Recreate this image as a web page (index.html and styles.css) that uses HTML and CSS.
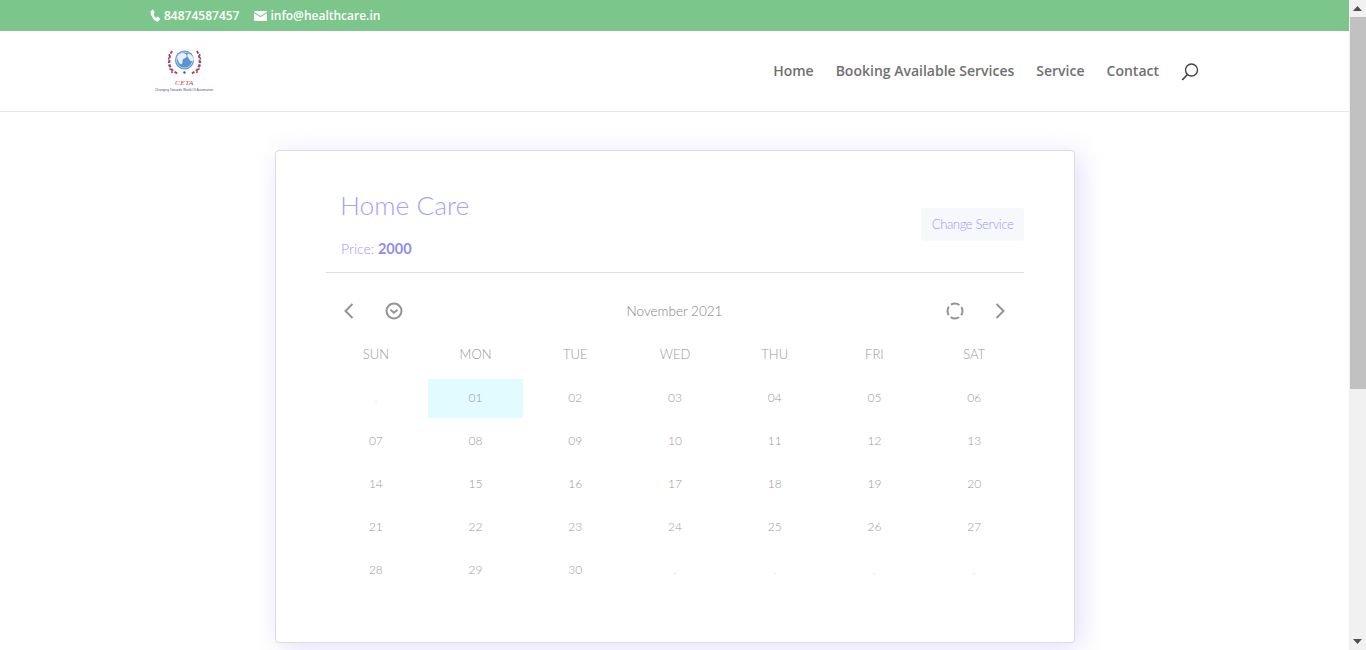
FILE: index.html
```html
<!DOCTYPE html>
<html>
<head>
<meta http-equiv="Content-Type" content="text/html; charset=utf-8"/>
<title>Home Care</title>
<link rel="stylesheet" href="styles.css">
</head>
<body>
<div class="window">
  <div class="page">
    <div class="topbar">
      <span class="contact">
        <svg class="ico-phone" viewBox="0 0 12 12" width="11" height="13" preserveAspectRatio="none"><path d="M2.6.6 1 1.8C.3 2.500 .6 4 1.400 5.700 2.300 7.600 4.100 9.900 6.300 11c1.300.7 2.500.6 3.300-.1l1.200-1.300c.3-.3.2-.7-.1-1L8.500 7.200c-.3-.2-.6-.2-.9.100l-.8.900C6 8 4.500 6.300 3.800 4.700l.9-.7c.3-.3.3-.6.200-.9L3.500.8C3.300.400 2.900.4 2.600.6z" fill="#fff"/></svg>
        84874587457
      </span>
      <span class="contact">
        <svg class="ico-mail" viewBox="0 0 13 10" width="13" height="10"><path d="M.8 0h11.400c.4 0 .8.300.8.700L6.500 5 0 .7C0 .3.400 0 .8 0z" fill="#fff"/><path d="M0 2l6.500 4.300L13 2v7.200c0 .5-.4.800-.8.800H.8C.4 10 0 9.700 0 9.200z" fill="#fff"/></svg>
        info@healthcare.in
      </span>
    </div>

    <header class="header">
      <svg class="logo" viewBox="0 0 60 46" width="60" height="46">
        <circle cx="29.500" cy="12" r="9.500" fill="#5a93ce"/>
        <circle cx="29.500" cy="12" r="8" fill="none" stroke="#d3e2f2" stroke-width=".8"/>
        <path d="M24.500 6c3-2 6-1 7 1s-1 3-3 4 0 4-2 5-3-3-4-5 0-4 2-5zM33.500 6c2 0 4 2 5 4s0 3-2 3-2-2-3-3-2-4 0-4z" fill="#e8f0f9"/>
        <path d="M17 3c-3.500 6-3.500 14 0 19l6 4" fill="none" stroke="#d23a3a" stroke-width="2" stroke-dasharray="3 1.600"/>
        <path d="M14.500 6c-2 7-1 14 3 19" fill="none" stroke="#3a62b0" stroke-width="1.400" stroke-dasharray="2 1.600"/>
        <path d="M42 3c3.500 6 3.500 14 0 19l-6 4" fill="none" stroke="#d23a3a" stroke-width="2" stroke-dasharray="3 1.600"/>
        <path d="M44.500 6c2 7 1 14-3 19" fill="none" stroke="#3a62b0" stroke-width="1.400" stroke-dasharray="2 1.600"/>
        <circle cx="29.500" cy="24.500" r="1.200" fill="#3a62b0"/>
        <text x="29.500" y="37" class="logo-name" text-anchor="middle">CETA</text>
        <text x="29" y="42.500" class="logo-tag" text-anchor="middle" textLength="58">Changing Towards World Of Automation</text>
      </svg>
      <nav class="menu">
        <a>Home</a>
        <a>Booking Available Services</a>
        <a>Service</a>
        <a>Contact</a>
        <svg class="ico-search" viewBox="0 0 18 18" width="18" height="18"><circle cx="10.500" cy="7" r="6" fill="none" stroke="#444" stroke-width="1.400"/><path d="M6.500 11.500 1.200 17" fill="none" stroke="#444" stroke-width="1.800"/></svg>
      </nav>
    </header>

    <main class="main">
      <section class="card">
        <div class="card-head">
          <div class="info">
            <h1 class="service-name">Home Care</h1>
            <div class="price">Price: <b>2000</b></div>
          </div>
          <a class="change-btn">Change Service</a>
        </div>

        <div class="cal-nav">
          <div class="cal-tools">
            <svg viewBox="0 0 24 24" width="24" height="24"><path d="M15.500 5 8.500 12l7 7" class="stroke"/></svg>
            <svg viewBox="0 0 24 24" width="24" height="24"><circle cx="12" cy="12" r="7.500" class="stroke"/><path d="m8.500 10.800 3.500 3 3.500-3" class="stroke"/></svg>
          </div>
          <div class="cal-title">November 2021</div>
          <div class="cal-tools right">
            <svg viewBox="0 0 24 24" width="24" height="24"><circle cx="12" cy="12" r="7.500" class="stroke ring"/></svg>
            <svg viewBox="0 0 24 24" width="24" height="24"><path d="m8.500 5 7 7-7 7" class="stroke"/></svg>
          </div>
        </div>

        <div class="week">
          <div>SUN</div><div>MON</div><div>TUE</div><div>WED</div><div>THU</div><div>FRI</div><div>SAT</div>
        </div>

        <div class="days">
          <div class="day blank">.</div><div class="day today">01</div><div class="day">02</div><div class="day">03</div><div class="day">04</div><div class="day">05</div><div class="day">06</div>
          <div class="day">07</div><div class="day">08</div><div class="day">09</div><div class="day">10</div><div class="day">11</div><div class="day">12</div><div class="day">13</div>
          <div class="day">14</div><div class="day">15</div><div class="day">16</div><div class="day">17</div><div class="day">18</div><div class="day">19</div><div class="day">20</div>
          <div class="day">21</div><div class="day">22</div><div class="day">23</div><div class="day">24</div><div class="day">25</div><div class="day">26</div><div class="day">27</div>
          <div class="day">28</div><div class="day">29</div><div class="day">30</div><div class="day blank">.</div><div class="day blank">.</div><div class="day blank">.</div><div class="day blank">.</div>
        </div>
      </section>
    </main>
  </div>

  <div class="scrollbar">
    <div class="arrow"><svg viewBox="0 0 9 5" width="9" height="5"><path d="M0 5 4.500 0 9 5z" fill="#505050"/></svg></div>
    <div class="track"><div class="thumb"></div></div>
    <div class="arrow"><svg viewBox="0 0 9 5" width="9" height="5"><path d="M0 0h9L4.500 5z" fill="#505050"/></svg></div>
  </div>
</div>
</body>
</html>
```

FILE: styles.css
```css
html, body {
  margin: 0;
  height: 650px;
  overflow: hidden;
  background-color: white;
}

body {
  font-family: "Open Sans", "Liberation Sans", sans-serif;
}

.window {
  display: flex;
  height: 650px;
}

.page {
  flex: 1;
  min-width: 0;
  overflow: hidden;
}

/* top green strip */
.topbar {
  display: flex;
  align-items: center;
  gap: 15px;
  height: 31px;
  padding-left: 150px;
  background-color: #7dc68b;
  color: #fff;
  font-size: 12px;
  font-weight: 600;
}

.contact {
  display: flex;
  align-items: center;
  gap: 3px;
}

/* logo and menu */
.header {
  display: flex;
  align-items: center;
  justify-content: space-between;
  height: 80px;
  padding: 0 150px 0 155px;
  border-bottom: 1px solid #e6e6e6;
}

.logo {
  display: block;
}

.logo-name {
  font-family: "Liberation Serif", serif;
  font-size: 7px;
  font-style: italic;
  letter-spacing: 0.6px;
  fill: #d0303a;
}

.logo-tag {
  font-family: "Liberation Sans", sans-serif;
  font-size: 3.200px;
  fill: #3a4f9a;
}

.menu {
  display: flex;
  align-items: center;
  gap: 22px;
  color: #707070;
  font-size: 14px;
  font-weight: 600;
}

.menu a {
  padding-bottom: 2px;
}

.ico-search {
  margin-top: 2px;
}

/* booking card */
.main {
  padding-top: 38px;
  padding-left: 275px;
}

.card {
  box-sizing: border-box;
  width: 800px;
  height: 493px;
  padding: 0 50px;
  border: 1px solid #dcdce4;
  border-radius: 4px;
  background-color: #fff;
  box-shadow: 5px 5px 28px rgba(108, 92, 231, 0.2);
  font-family: Lato, "Liberation Sans", sans-serif;
  font-weight: 300;
}

.card-head {
  display: flex;
  align-items: center;
  justify-content: space-between;
  padding: 38px 0 13px 15px;
  border-bottom: 1px solid #e0e0e0;
}

.service-name {
  margin: -1px 0 17px -1px;
  color: #a5a2fb;
  font-size: 26.400px;
  font-weight: 300;
  line-height: 34px;
}

.price {
  color: #9d96fd;
  font-size: 14px;
  line-height: 20px;
}

.price b {
  color: #8f8bf5;
  font-size: 14.500px;
  font-weight: 700;
}

.change-btn {
  padding: 0 10.500px 1px;
  border-radius: 3px;
  background-color: #f7f8fb;
  color: #9d96fd;
  font-size: 13px;
  letter-spacing: -0.35px;
  line-height: 32px;
}

/* calendar */
.cal-nav {
  display: flex;
  align-items: center;
  justify-content: space-between;
  height: 40px;
  margin-top: 18px;
  padding: 0 12px 0 11px;
}

.cal-tools {
  display: flex;
  gap: 21px;
  width: 70px;
}

.cal-tools.right {
  justify-content: flex-end;
}

.cal-title {
  color: #808080;
  font-size: 13.500px;
}

.stroke {
  fill: none;
  stroke: #949494;
  stroke-width: 2;
}

.stroke.ring {
  stroke-dasharray: 9 2.780;
  stroke-dashoffset: 4.500;
}

.week, .days {
  display: grid;
  grid-template-columns: repeat(7, 1fr);
  text-align: center;
}

.week {
  margin-top: 8px;
  color: #999;
  font-size: 13px;
  line-height: 30px;
}

.days {
  margin-top: 8px;
  grid-auto-rows: 43px;
  color: #999;
  font-size: 12px;
}

.day {
  display: flex;
  align-items: center;
  justify-content: center;
  margin: 2px;
  padding-bottom: 2px;
}

.today {
  background-color: #e1fbff;
}

.blank {
  color: #ccc;
}

/* fake browser scrollbar */
.scrollbar {
  display: flex;
  flex-direction: column;
  width: 17px;
  background-color: #f1f1f1;
}

.arrow {
  display: flex;
  align-items: center;
  justify-content: center;
  height: 17px;
}

.track {
  flex: 1;
}

.thumb {
  height: 372px;
  margin-left: 1px;
  background-color: #c1c1c1;
}
```
